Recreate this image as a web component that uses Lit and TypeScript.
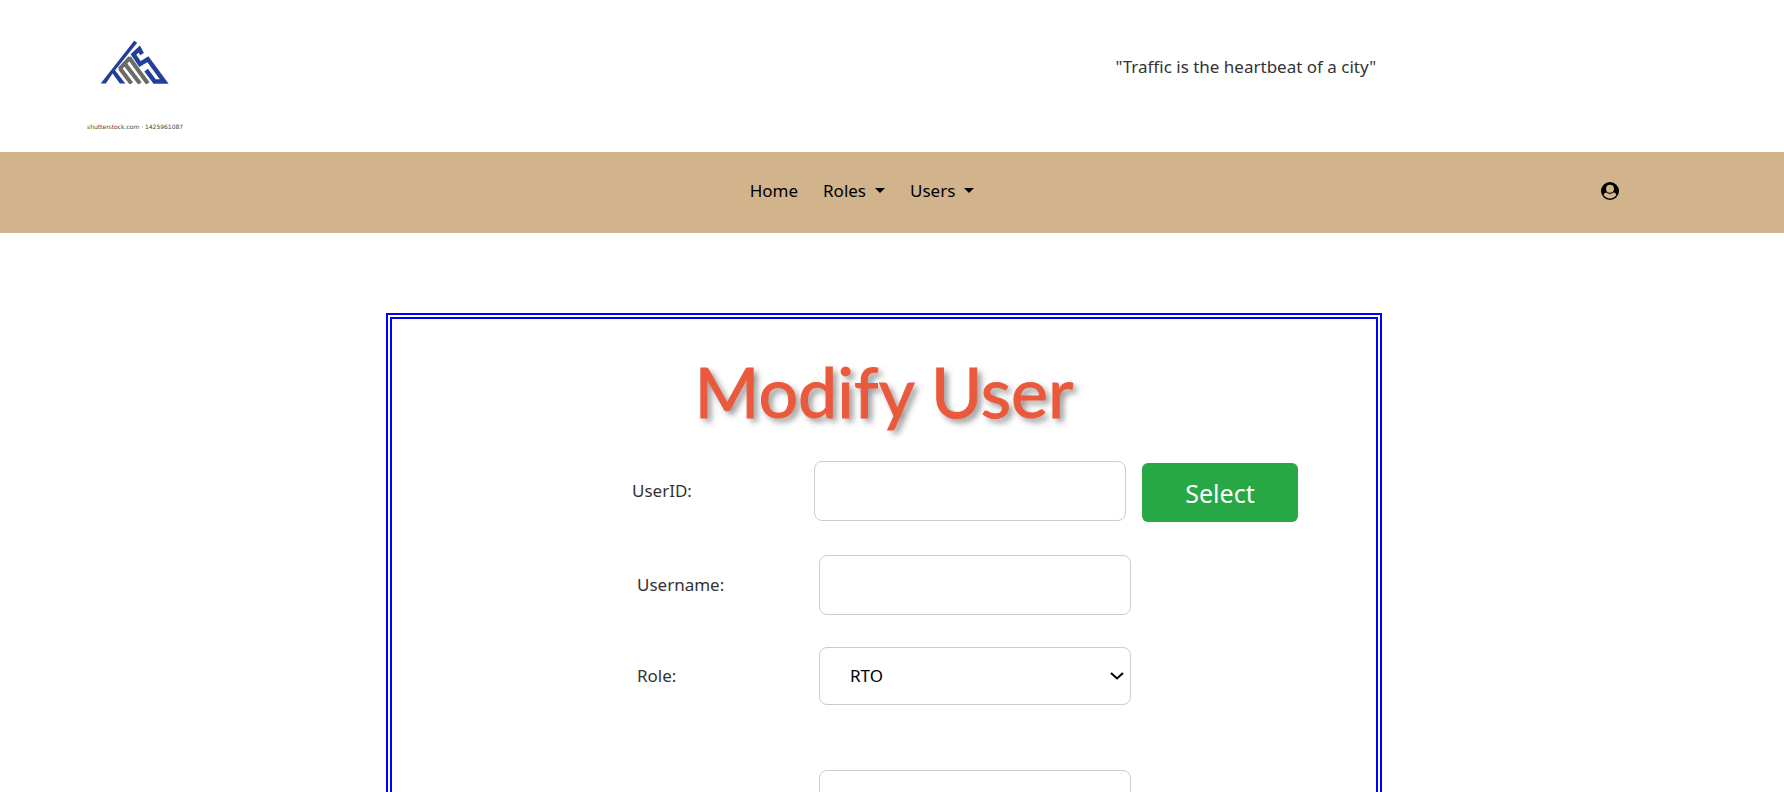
import { LitElement, html, css, svg } from "lit";
import { customElement, state } from "lit/decorators.js";

const logo = svg`
  <svg class="mark" viewBox="92 62 202 128" aria-hidden="true">
    <g fill="#22409a">
      <path d="M192 64 L201 70 L136 150 L166 189 L150 189 L129 160 L109 189 L94 189 Z"></path>
    </g>
    <g fill="none" stroke="#22409a" stroke-width="13" stroke-linejoin="miter">
      <path d="M215 103 L207 88 L190 104 L209 132 L232 118 L280 183 L252 183 L227 150"></path>
    </g>
    <g fill="none" stroke="#6a6a6a" stroke-width="12">
      <path d="M149 147 L180 113"></path>
      <path d="M150 144 L184 189"></path>
      <path d="M163 129 L209 189"></path>
      <path d="M177 113 L232 189"></path>
    </g>
  </svg>`;

const userIcon = svg`
  <svg class="user-icon" viewBox="0 0 18 18" aria-hidden="true">
    <circle cx="9" cy="9" r="9" fill="#000"></circle>
    <circle cx="9" cy="6.8" r="4" fill="#d2b48c"></circle>
    <path d="M2.6 13C3 11.2 4.4 10.7 5.6 10.6Q9 13.4 12.4 10.6C13.6 10.7 15 11.2 15.4 13A7.7 7.7 0 0 1 2.6 13Z" fill="#d2b48c"></path>
  </svg>`;

@customElement("app-root")
export class AppRoot extends LitElement {
  @state() private role = "RTO";

  static styles = css`
    :host {
      display: block;
      height: 100vh;
      overflow-y: auto;
      scrollbar-width: none;
      background: #fff;
      color: #333;
      font: 17px/24px Tahoma, "Noto Sans", sans-serif;
    }
    * { box-sizing: border-box; }
    .header {
      display: grid;
      grid-template-columns: 20fr 13fr;
      height: 152px;
      padding-left: 87px;
    }
    .brand {
      display: flex;
      flex-direction: column;
      align-items: flex-start;
      padding-top: 40px;
    }
    .mark { width: 69px; height: 44px; margin-left: 13px; }
    .credit {
      margin-top: 37px;
      color: #444;
      font: 6px/12px "DejaVu Sans", sans-serif;
    }
    .quote { margin: 0; padding-top: 55px; }
    .nav {
      display: grid;
      grid-template-columns: 1fr auto 1fr;
      align-items: center;
      height: 81px;
      padding: 0 165px 4px 105px;
      background: #d2b48c;
    }
    .menu {
      display: flex;
      grid-column: 2;
      gap: 25px;
      margin: 0;
      padding: 0;
      list-style: none;
    }
    .link {
      display: flex;
      align-items: center;
      gap: 9px;
      padding: 0;
      border: 0;
      background: none;
      color: #000;
      font: inherit;
      text-decoration: none;
    }
    .caret { border: 5px solid transparent; border-top-color: #000; border-bottom: 0; }
    .account { justify-self: end; display: flex; padding: 0; border: 0; background: none; }
    .user-icon { width: 18px; height: 18px; }
    .main { padding: 80px 16px 80px 0; }
    .panel {
      width: 996px;
      max-width: 100%;
      margin: 0 auto;
      padding: 24px 0 60px;
      border: 6px double #00f;
    }
    .title {
      margin: 0 0 21px;
      color: #eb593c;
      font: 400 70px/96px "Comic Sans MS", Lato, cursive;
      text-align: center;
      text-shadow: 4px 4px 6px rgba(0, 0, 0, 0.45);
      -webkit-text-stroke: 1px #eb593c;
    }
    .row {
      display: grid;
      grid-template-columns: 182px 312px 156px;
      align-items: center;
      margin-bottom: 32px;
      padding-left: 245px;
    }
    .row.lookup { margin-bottom: 33px; padding-left: 240px; }
    .row.gap { margin-bottom: 65px; }
    .control {
      width: 100%;
      height: 60px;
      padding: 0 30px;
      border: 1px solid #ccc;
      border-radius: 8px;
      background: #fff;
      color: #000;
      font: inherit;
    }
    .select-wrap { display: grid; align-items: center; }
    .select-wrap > * { grid-area: 1 / 1; }
    .select { height: 58px; appearance: none; }
    .chevron {
      justify-self: end;
      width: 14px;
      height: 8px;
      margin-right: 7px;
      pointer-events: none;
    }
    .submit {
      width: 156px;
      height: 59px;
      margin: 3px 0 0 16px;
      border: 0;
      border-radius: 6px;
      background: #28a745;
      color: #fff;
      font: 25px/32px Tahoma, "Noto Sans", sans-serif;
    }
  `;

  render() {
    return html`
      <header class="header">
        <div class="brand">${logo}<span class="credit">shutterstock.com · 1425961087</span></div>
        <p class="quote">"Traffic is the heartbeat of a city"</p>
      </header>
      <nav class="nav">
        <ul class="menu">
          <li><a class="link" href="#home">Home</a></li>
          <li><button class="link" type="button">Roles <span class="caret"></span></button></li>
          <li><button class="link" type="button">Users <span class="caret"></span></button></li>
        </ul>
        <button class="account" type="button" aria-label="Account">${userIcon}</button>
      </nav>
      <main class="main">
        <form class="panel" @submit=${(e: Event) => e.preventDefault()}>
          <h1 class="title">Modify User</h1>
          <div class="row lookup">
            <label for="userid">UserID:</label>
            <input class="control" id="userid" type="text" />
            <button class="submit" type="submit">Select</button>
          </div>
          <div class="row">
            <label for="username">Username:</label>
            <input class="control" id="username" type="text" />
          </div>
          <div class="row gap">
            <label for="role">Role:</label>
            <div class="select-wrap">
              <select class="control select" id="role" .value=${this.role}
                @change=${(e: Event) => (this.role = (e.target as HTMLSelectElement).value)}>
                <option>RTO</option>
              </select>
              <svg class="chevron" viewBox="0 0 14 8" aria-hidden="true">
                <path d="M1 1 L7 6.5 L13 1" fill="none" stroke="#000" stroke-width="2"></path>
              </svg>
            </div>
          </div>
          <div class="row">
            <span></span>
            <input class="control" type="text" aria-label="Details" />
          </div>
        </form>
      </main>
    `;
  }
}
